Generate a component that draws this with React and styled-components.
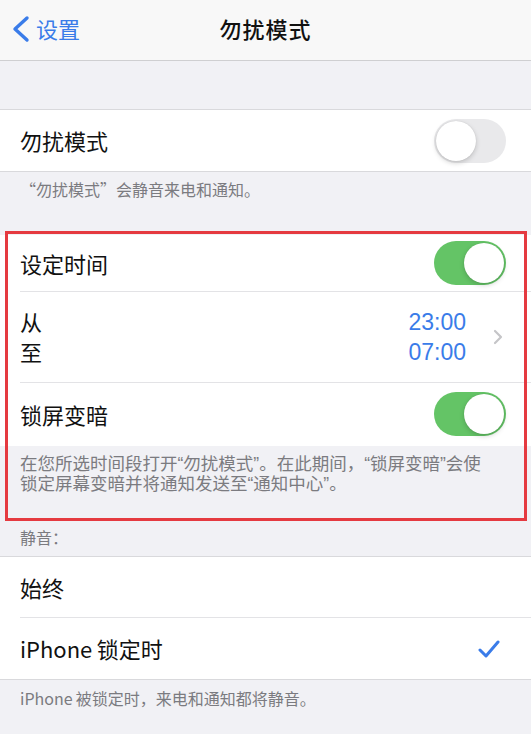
import React from 'react';
import styled, { createGlobalStyle } from "styled-components";

const GlobalStyle = createGlobalStyle`
    body {
        margin: 0;
        background: #f1f1f5;
        font-family: "Noto Sans CJK SC", "Liberation Sans", sans-serif;
    }
`

const Page = styled.div`
    width: 531px;
    min-height: 734px;
    background: #f1f1f5;
    overflow: hidden;
`

const NavBar = styled.div`
    height: 61px;
    box-sizing: border-box;
    padding-bottom: 5px;
    background: #f8f8f8;
    border-bottom: 1px solid #cfcfd1;
    display: grid;
    grid-template-columns: 1fr auto 1fr;
    align-items: center;
`

const BackButton = styled.div`
    display: flex;
    align-items: center;
    gap: 5px;
    padding-left: 11px;
    color: #3a7ce9;
    font-size: 22px;

    svg {
        display: block;
        margin-top: 3px;
    }
`

const Title = styled.div`
    font-size: 22px;
    font-weight: 500;
    color: #111;
    letter-spacing: 1px;
`

const Spacer = styled.div`
    height: ${p => p.h}px;
`

const Group = styled.div`
    background: #ffffff;
    border-top: 1px solid ${p => p.noTop ? '#f1f1f5' : '#d9d9dc'};
    border-bottom: 1px solid ${p => p.noBottom ? '#ffffff' : '#d9d9dc'};
`

const Row = styled.div`
    height: ${p => p.h || 61}px;
    margin-left: 20px;
    padding-right: 25px;
    display: flex;
    align-items: center;
    justify-content: space-between;
    border-top: ${p => p.divider ? '1px solid #e3e3e6' : 'none'};
    font-size: 22px;
    color: #111;
`

const Label = styled.span`
    line-height: 1;
    padding-bottom: 1px;
`

const Stack = styled.div`
    display: flex;
    flex-direction: column;
    line-height: 30px;
    padding-bottom: ${p => p.blue ? '0' : '2px'};
    text-align: ${p => p.right ? 'right' : 'left'};
    color: ${p => p.blue ? '#3a7ce9' : '#111'};
    font-family: ${p => p.blue ? '"Liberation Sans", sans-serif' : 'inherit'};
    font-size: ${p => p.blue ? '23px' : '22px'};
`

const TimeBox = styled.div`
    display: flex;
    align-items: center;
    gap: 27px;
    margin-right: 3px;
`

const Footer = styled.div`
    padding: ${p => p.pad || '9px 20px 0'};
    height: ${p => p.h}px;
    box-sizing: border-box;
    font-size: ${p => p.size || 16}px;
    line-height: 20px;
    color: #7b7b80;
    font-family: ${p => p.latinQuotes ? '"Liberation Sans", "Noto Sans CJK SC", sans-serif' : 'inherit'};
`

const Highlight = styled.div`
    position: relative;

    &::after {
        content: "";
        position: absolute;
        top: -3px;
        left: 5px;
        right: 4px;
        bottom: -3px;
        border: 3px solid #e53a40;
        pointer-events: none;
    }
`

const Track = styled.div`
    width: 72px;
    height: 44px;
    border-radius: 22px;
    box-sizing: border-box;
    background: ${p => p.on ? '#64c466' : '#e9e9eb'};
    position: relative;
    flex-shrink: 0;
`

const Knob = styled.div`
    position: absolute;
    top: 2px;
    left: ${p => p.on ? '30px' : '2px'};
    width: 40px;
    height: 40px;
    border-radius: 50%;
    background: #ffffff;
    box-shadow: 0 2px 5px rgba(0, 0, 0, 0.18), 0 0 1px rgba(0, 0, 0, 0.15);
`

const Check = styled.svg`
    margin-right: 6px;
`

const Toggle = ({on}) => <Track on={on}><Knob on={on} /></Track>

const App = () => {
    return <Page>
        <GlobalStyle />
        <NavBar>
            <BackButton>
                <svg width="20" height="28" viewBox="0 0 20 28">
                    <polyline points="16,3 4,14 16,25" fill="none" stroke="#3a7ce9" strokeWidth="3.4" strokeLinecap="round" strokeLinejoin="round" />
                </svg>
                <span>设置</span>
            </BackButton>
            <Title>勿扰模式</Title>
            <div />
        </NavBar>

        <Spacer h={48} />

        <Group>
            <Row h={61}>
                <Label>勿扰模式</Label>
                <Toggle on={false} />
            </Row>
        </Group>
        <Footer h={62} pad="7px 20px 0">“勿扰模式”会静音来电和通知。</Footer>

        <Highlight>
            <Group noTop noBottom>
                <Row h={56}>
                    <Label>设定时间</Label>
                    <Toggle on />
                </Row>
                <Row h={90} divider>
                    <Stack>
                        <span>从</span>
                        <span>至</span>
                    </Stack>
                    <TimeBox>
                        <Stack right blue>
                            <span>23:00</span>
                            <span>07:00</span>
                        </Stack>
                        <svg width="10" height="16" viewBox="0 0 10 16">
                            <polyline points="2,2 8,8 2,14" fill="none" stroke="#c5c5c8" strokeWidth="2.2" strokeLinecap="round" strokeLinejoin="round" />
                        </svg>
                    </TimeBox>
                </Row>
                <Row h={62} divider>
                    <Label>锁屏变暗</Label>
                    <Toggle on />
                </Row>
            </Group>
            <Footer h={72} pad="8px 40px 0 20px" size={17.5} latinQuotes>
                在您所选时间段打开“勿扰模式”。在此期间，“锁屏变暗”会使锁定屏幕变暗并将通知发送至“通知中心”。
            </Footer>
        </Highlight>

        <Footer h={38} pad="9px 20px 0">静音：</Footer>

        <Group>
            <Row h={60}>
                <Label>始终</Label>
            </Row>
            <Row h={61} divider>
                <Label>iPhone{'\u2009'}锁定时</Label>
                <Check width="22" height="20" viewBox="0 0 22 20">
                    <polyline points="2,11 8,17 20,3" fill="none" stroke="#3a7ce9" strokeWidth="3" strokeLinecap="round" strokeLinejoin="round" />
                </Check>
            </Row>
        </Group>
        <Footer h={60} pad="8px 20px 0">iPhone{'\u2009'}被锁定时，来电和通知都将静音。</Footer>
    </Page>
}

export default App;
